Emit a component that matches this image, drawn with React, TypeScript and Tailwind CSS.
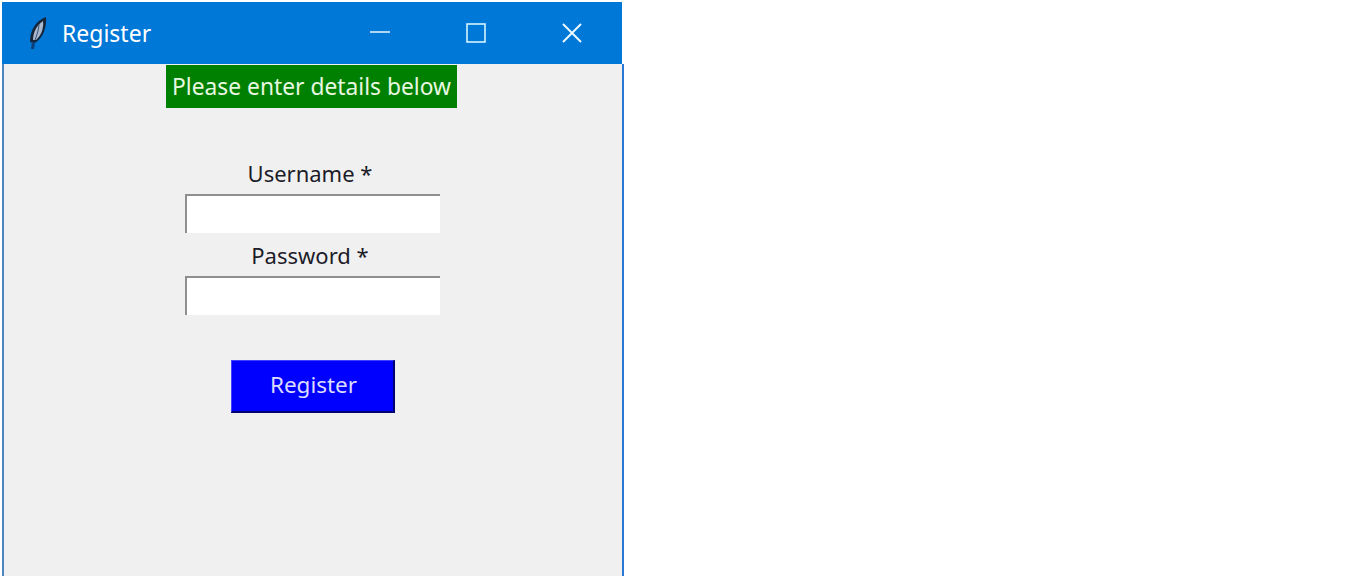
function FeatherIcon() {
  return (
    <svg width="20" height="34" viewBox="0 0 20 34" className="shrink-0">
      <path d="M2 26 C2 15 7 5 18 1 C19 11 15 22 7 27 Z" fill="#16263a" />
      <path d="M5 24 C5 16 9 9 15 5 C16 12 13 20 8 24 Z" fill="#a9b8cc" />
      <path d="M11 8 C11 13 9 19 7 24" stroke="#3c5472" strokeWidth="1" fill="none" />
      <path d="M4.5 33 L5.5 26" stroke="#0d3f78" strokeWidth="3" />
    </svg>
  );
}

function MinimizeIcon() {
  return (
    <svg width="20" height="20" viewBox="0 0 20 20" stroke="#e6f6ff" strokeWidth="1.5">
      <path d="M0 9 H20" />
    </svg>
  );
}

function MaximizeIcon() {
  return (
    <svg width="20" height="20" viewBox="0 0 20 20" fill="none" stroke="#d4f4ff" strokeWidth="1.6">
      <rect x="1" y="1" width="18" height="18" />
    </svg>
  );
}

function CloseIcon() {
  return (
    <svg width="20" height="20" viewBox="0 0 20 20" fill="none" stroke="#eefaff" strokeWidth="1.9">
      <path d="M1 1 L19 19 M19 1 L1 19" />
    </svg>
  );
}

function Field({ label }: { label: string }) {
  return (
    <div className="flex flex-col items-center">
      <label className="mr-[6px] text-[22px] leading-[30px] text-[#1c1c28]">{label}</label>
      <input
        type="text"
        className="mt-[6px] mr-[1px] w-[255px] h-[39px] bg-white border-t-2 border-l-2 border-[#8f8f8f] outline-none"
      />
    </div>
  );
}

export default function App() {
  return (
    <div className="h-[576px] w-[1360px] bg-white font-['Noto_Sans',sans-serif] overflow-hidden pt-[2px] pl-[2px]">
      <div className="w-[622px] h-[574px] flex flex-col">
        {/* Title bar */}
        <div className="h-[62px] w-[620px] shrink-0 bg-[#0078d7] flex items-center text-white">
          <div className="ml-[26px] flex items-center w-[34px]">
            <FeatherIcon />
          </div>
          <span className="text-[23px] leading-none">Register</span>
          <div className="ml-auto flex items-center">
            <div className="w-[96px] flex justify-center"><MinimizeIcon /></div>
            <div className="w-[96px] flex justify-center"><MaximizeIcon /></div>
            <div className="w-[96px] flex justify-center mr-[2px]"><CloseIcon /></div>
          </div>
        </div>

        {/* Form */}
        <div className="flex-1 flex flex-col items-center pt-[1px] bg-[#f0f0f0] border-l-2 border-r-2 border-l-[#4a86c0] border-r-[#2a78d8]">
          <div className="mr-[3px] pt-[2px] w-[291px] h-[43px] bg-[#008000] text-[#e8f8e0] text-[22.8px] flex items-center justify-center">
            Please enter details below
          </div>
          <div className="mt-[50px] flex flex-col gap-[7px]">
            <Field label="Username *" />
            <Field label="Password *" />
          </div>
          <button className="mt-[45px] pb-[2px] pl-[2px] w-[164px] h-[53px] bg-[#0000ff] text-[#dcdcff] text-[22.5px] border-t border-l border-[#4040ff] border-r-2 border-b-2 border-r-[#00006e] border-b-[#00006e]">
            Register
          </button>
        </div>
      </div>
    </div>
  );
}
